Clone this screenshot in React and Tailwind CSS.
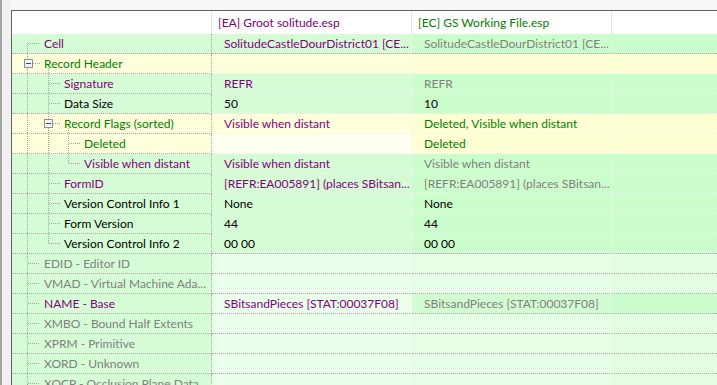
import React from "react";

const TXT = {
  p: "text-[#800080]",
  g: "text-[#008000]",
  k: "text-black",
  s: "text-[#808080]",
};

// backgrounds: label, col2, col3, col4
const BG = {
  g: ["bg-[#d6fcd6]", "bg-[#d6fcd6]", "bg-[#ccfdcc]", "bg-[#ccfdcc]"],
  y: ["bg-[#ffffdc]", "bg-[#ffffdc]", "bg-[#ffffd4]", "bg-[#ffffd4]"],
  d: ["bg-[#ffffdc]", "bg-[#fffff2]", "bg-[#ffffd4]", "bg-[#ffffd4]"],
  l: ["bg-[#d6fcd6]", "bg-[#eaffea]", "bg-[#e6fee6]", "bg-[#e2fde2]"],
  n: ["bg-[#d6fcd6]", "bg-[#eaffea]", "bg-[#d2fdd2]", "bg-[#ccfdcc]"],
};

// v: vertical guides [x, y1, y2]; h: horizontal tick [x1, x2]; box: x of expand box
const ROWS = [
  { label: "Cell", lc: "p", bg: "g", c2: "SolitudeCastleDourDistrict01 [CE...", t2: "p", c3: "SolitudeCastleDourDistrict01 [CE...", t3: "s", lvl: 0, v: [[15, 10, 20]], h: [16, 28], sep: "dark" },
  { label: "Record Header", lc: "g", bg: "y", lvl: 0, v: [[15, 0, 20], [36, 14, 20]], box: 12, h: [21, 28], sep: "light" },
  { label: "Signature", lc: "p", bg: "g", c2: "REFR", t2: "p", c3: "REFR", t3: "s", lvl: 1, v: [[15, 0, 20], [36, 0, 20]], h: [37, 48], sep: "light" },
  { label: "Data Size", lc: "k", bg: "g", c2: "50", t2: "k", c3: "10", t3: "k", lvl: 1, v: [[15, 0, 20], [36, 0, 20]], h: [37, 48], sep: "light" },
  { label: "Record Flags (sorted)", lc: "g", bg: "y", c2: "Visible when distant", t2: "p", c3: "Deleted, Visible when distant", t3: "g", lvl: 1, v: [[15, 0, 20], [36, 0, 20], [56, 14, 20]], box: 32, h: [41, 48], sep: "light" },
  { label: "Deleted", lc: "g", bg: "d", c3: "Deleted", t3: "g", lvl: 2, v: [[15, 0, 20], [36, 0, 20], [56, 0, 20]], h: [57, 68], sep: "light" },
  { label: "Visible when distant", lc: "p", bg: "g", c2: "Visible when distant", t2: "p", c3: "Visible when distant", t3: "s", lvl: 2, v: [[15, 0, 20], [36, 0, 20], [56, 0, 10]], h: [57, 68], sep: "light" },
  { label: "FormID", lc: "p", bg: "g", c2: "[REFR:EA005891] (places SBitsan...", t2: "p", c3: "[REFR:EA005891] (places SBitsan...", t3: "s", lvl: 1, v: [[15, 0, 20], [36, 0, 20]], h: [37, 48], sep: "light" },
  { label: "Version Control Info 1", lc: "k", bg: "g", c2: "None", t2: "k", c3: "None", t3: "k", lvl: 1, v: [[15, 0, 20], [36, 0, 20]], h: [37, 48], sep: "light" },
  { label: "Form Version", lc: "k", bg: "g", c2: "44", t2: "k", c3: "44", t3: "k", lvl: 1, v: [[15, 0, 20], [36, 0, 20]], h: [37, 48], sep: "light" },
  { label: "Version Control Info 2", lc: "k", bg: "g", c2: "00 00", t2: "k", c3: "00 00", t3: "k", lvl: 1, v: [[15, 0, 20], [36, 0, 10]], h: [37, 48], sep: "dark" },
  { label: "EDID - Editor ID", lc: "s", bg: "l", lvl: 0, v: [[15, 0, 20]], h: [16, 28], sep: "dark" },
  { label: "VMAD - Virtual Machine Ada...", lc: "s", bg: "l", lvl: 0, v: [[15, 0, 20]], h: [16, 28], sep: "dark" },
  { label: "NAME - Base", lc: "p", bg: "n", c2: "SBitsandPieces [STAT:00037F08]", t2: "p", c3: "SBitsandPieces [STAT:00037F08]", t3: "s", lvl: 0, v: [[15, 0, 20]], h: [16, 28], sep: "dark" },
  { label: "XMBO - Bound Half Extents", lc: "s", bg: "l", lvl: 0, v: [[15, 0, 20]], h: [16, 28], sep: "dark" },
  { label: "XPRM - Primitive", lc: "s", bg: "l", lvl: 0, v: [[15, 0, 20]], h: [16, 28], sep: "dark" },
  { label: "XORD - Unknown", lc: "s", bg: "l", lvl: 0, v: [[15, 0, 20]], h: [16, 28], sep: "dark" },
  { label: "XOCP - Occlusion Plane Data", lc: "s", bg: "l", lvl: 0, v: [[15, 0, 20]], h: [16, 28], sep: "dark" },
];

const PAD = ["pl-[32px]", "pl-[52px]", "pl-[72px]"];

function TreeLines({ row }) {
  return (
    <svg className="absolute left-0 top-0" width="80" height="20">
      {row.v.map(([x, y1, y2], i) => (
        <line key={i} x1={x + 0.5} y1={y1} x2={x + 0.5} y2={y2} stroke="#a0a0a0" strokeDasharray="1 1" />
      ))}
      <line x1={row.h[0]} y1="9.5" x2={row.h[1]} y2="9.5" stroke="#a0a0a0" strokeDasharray="1 1" />
      {row.box !== undefined && (
        <g>
          <rect x={row.box + 0.5} y="5.5" width="8" height="8" fill="#f4f4f4" stroke="#919191" />
          <line x1={row.box + 2} y1="9.5" x2={row.box + 7} y2="9.5" stroke="#3c4a6b" />
        </g>
      )}
    </svg>
  );
}

function Row({ row }) {
  const bg = BG[row.bg];
  const sep = row.sep === "dark" ? "border-[#a8a8a8]" : "border-[#f2f2f2]";
  return (
    <div className="flex h-[20px] leading-[19px] whitespace-nowrap">
      <div className={`relative w-[200px] shrink-0 border-r border-dotted border-r-[#a8a8a8] border-b border-b-[#a8a8a8] ${bg[0]} ${PAD[row.lvl]} ${TXT[row.lc]}`}>
        <TreeLines row={row} />
        <span className="relative">{row.label}</span>
      </div>
      <div className={`w-[200px] shrink-0 border-r border-dotted border-r-[#f4f4f4] border-b ${sep} ${bg[1]} pl-[12px] ${row.t2 ? TXT[row.t2] : ""}`}>
        {row.c2 || ""}
      </div>
      <div className={`w-[200px] shrink-0 border-r border-dotted border-r-[#f4f4f4] border-b ${sep} ${bg[2]} pl-[12px] ${row.t3 ? TXT[row.t3] : ""}`}>
        {row.c3 || ""}
      </div>
      <div className={`flex-1 border-b border-dotted ${sep} ${bg[3]}`} />
    </div>
  );
}

export default function App() {
  return (
    <div className="w-[717px] h-[385px] overflow-hidden flex bg-[#f0f0f0] text-[12px] font-['Segoe_UI','Lato',sans-serif]">
      <div className="w-[11px] shrink-0 flex">
        <div className="w-[2px] bg-[#a5a5a5]" />
        <div className="flex-1 bg-[#f0f0f0]" />
      </div>
      <div className="flex-1 flex flex-col min-w-0">
        <div className="h-[10px] shrink-0 bg-[#f7f7f7]" />
        <div className="flex-1 border-l border-t border-[#646464] bg-white overflow-hidden">
          <div className="flex h-[23px] leading-[23px] whitespace-nowrap bg-white">
            <div className="w-[200px] shrink-0 border-r border-[#e3e3e3]" />
            <div className="w-[200px] shrink-0 border-r border-[#e3e3e3] pl-[6px] text-[#800080]">[EA] Groot solitude.esp</div>
            <div className="w-[200px] shrink-0 border-r border-[#e3e3e3] pl-[6px] text-[#008000]">[EC] GS Working File.esp</div>
            <div className="flex-1" />
          </div>
          {ROWS.map((r, i) => (
            <Row key={i} row={r} />
          ))}
        </div>
      </div>
    </div>
  );
}
